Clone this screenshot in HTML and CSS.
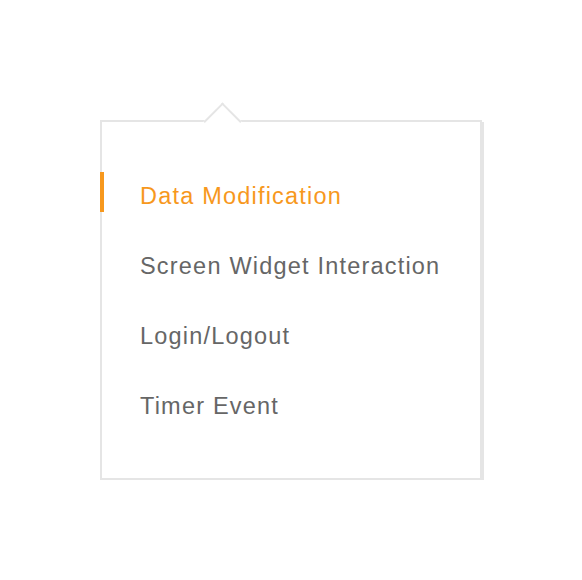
FILE: index.html
```html
<!DOCTYPE html>
<html>
<head>
<meta charset="utf-8">
<link rel="stylesheet" href="styles.css">
</head>
<body>
<div class="stage">
  <div class="popover">
    <span class="arrow"></span>
    <ul class="menu">
      <li class="item active">Data Modification</li>
      <li class="item">Screen Widget Interaction</li>
      <li class="item">Login/Logout</li>
      <li class="item">Timer Event</li>
    </ul>
  </div>
</div>
</body>
</html>
```
FILE: styles.css
```css
html, body {
  margin: 0;
  padding: 0;
  background: #ffffff;
}
.stage {
  padding: 120px 0 0 100px;
}
.popover {
  position: relative;
  width: 378px;
  height: 356px;
  border: 2px solid #e5e5e5;
  box-shadow: 2px 2px 0 #e5e5e5;
  background: #fff;
  box-sizing: content-box;
}
.arrow {
  position: absolute;
  top: -14px;
  left: 107px;
  width: 25px;
  height: 25px;
  background: #fff;
  border-top: 2px solid #e5e5e5;
  border-left: 2px solid #e5e5e5;
  transform: rotate(45deg);
}
.menu {
  list-style: none;
  margin: 0;
  padding: 50px 0 0 38px;
  display: flex;
  flex-direction: column;
  gap: 30px;
}
.item {
  position: relative;
  box-sizing: border-box;
  height: 40px;
  padding-top: 6px;
  line-height: 36px;
  font-family: "Liberation Sans", Arial, sans-serif;
  font-size: 23.5px;
  letter-spacing: 1.2px;
  color: #666666;
  white-space: nowrap;
}
.item.active {
  color: #f7981d;
}
.item.active::before {
  content: "";
  position: absolute;
  left: -40px;
  top: 0;
  width: 4px;
  height: 40px;
  background: #f7981d;
}
```
